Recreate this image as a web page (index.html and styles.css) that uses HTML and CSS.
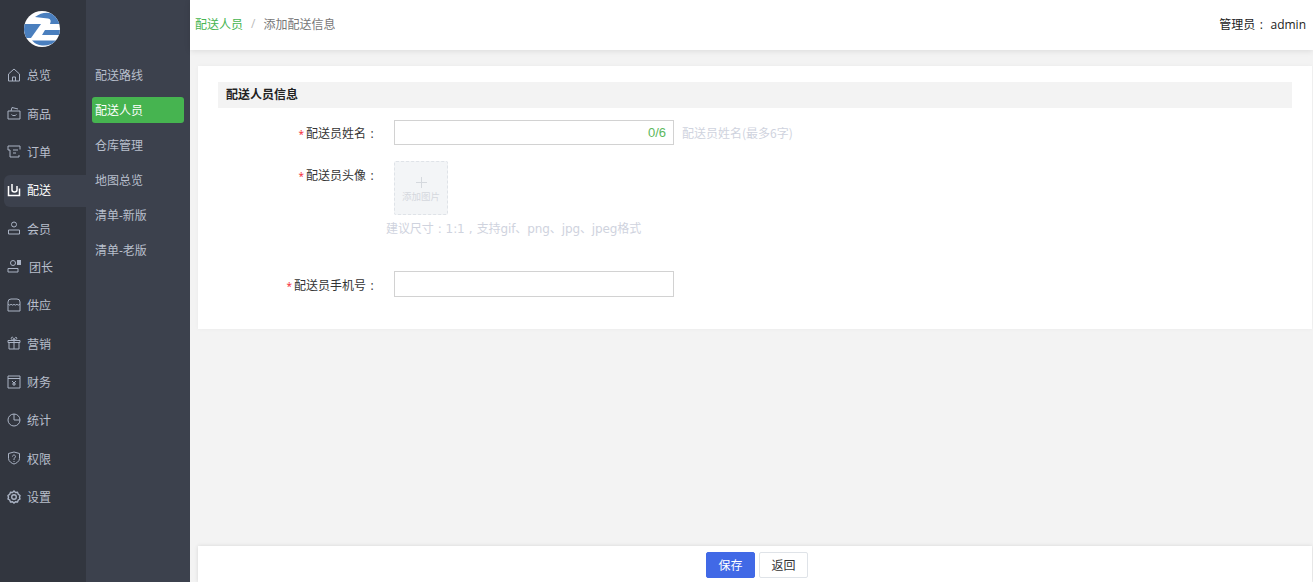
FILE: index.html
```html
<!DOCTYPE html>
<html lang="zh">
<head>
<meta charset="utf-8">
<title>添加配送信息</title>
<link rel="stylesheet" href="styles.css">
</head>
<body>
<div class="app">
  <aside class="rail">
    <div class="logo">
      <svg viewBox="0 0 36 36" width="36" height="36">
        <defs><clipPath id="disc"><circle cx="18" cy="18" r="18"/></clipPath></defs>
        <g clip-path="url(#disc)">
          <rect width="36" height="36" fill="#fff"/>
          <path d="M11 6Q19 0 28 2.500Q34 6 36 13H26Q28 8 24 7.500Q17 6.500 11 6z" fill="#4a7fbe"/>
          <path d="M0 13H17L7 27H2Q-1 20 0 13z" fill="#4a7fbe"/>
          <path d="M21 19H36V24H18z" fill="#4a7fbe"/>
          <path d="M8 29.500H33Q27 35 18 34.500Q12 34 8 29.500z" fill="#4a7fbe"/>
        </g>
      </svg>
    </div>
    <nav class="rail-list">
      <a class="rail-item"><svg class="ic" viewBox="0 0 14 14"><path d="M1.500 6L7 1l5.500 5v7h-11zM5.500 13V9h3v4"/></svg><span>总览</span></a>
      <a class="rail-item"><svg class="ic" viewBox="0 0 14 14"><path d="M1 5h12v8H1zM4 5l1-3.500 6 1.500M4.500 8.500c1 1.500 4 1.500 5 0"/></svg><span>商品</span></a>
      <a class="rail-item"><svg class="ic" viewBox="0 0 14 14"><path d="M1 2h12v3.500M1 2v4h2v7h9v-2M6 6h5M6 9h3"/></svg><span>订单</span></a>
      <a class="rail-item active"><svg class="ic" viewBox="0 0 14 14"><path d="M1.500 3v9.500h11V5.500M5 1v6c0 2.500 5 2.500 5 0V3"/></svg><span>配送</span></a>
      <a class="rail-item"><svg class="ic" viewBox="0 0 14 14"><circle cx="7" cy="3.500" r="2.500"/><path d="M1.500 9h11v4h-11z"/></svg><span>会员</span></a>
      <a class="rail-item leader"><svg class="ic" viewBox="0 0 14 14"><circle cx="6" cy="4" r="2.500"/><path d="M1 9.500h10v3.500H1z"/><path class="fill" d="M10 1h4v5h-4z"/></svg><span>团长</span></a>
      <a class="rail-item"><svg class="ic" viewBox="0 0 14 14"><path d="M4 1h6q3 0 3 3v9H1V4q0-3 3-3zM1 6c1 1.500 2.500 1.500 3 0 1 1.500 2.500 1.500 3 0 .5 1.500 2 1.500 3 0 .5 1.500 2 1.500 3 0"/></svg><span>供应</span></a>
      <a class="rail-item"><svg class="ic" viewBox="0 0 14 14"><path d="M1 4.500h12v2H1zM2 6.500V13h10V6.500M7 4.500V13M7 4.500C5 4 3.500 3 4.500 1.500S7 3 7 4.500c0-1.500 1.500-4 2.500-3S9 4 7 4.500"/></svg><span>营销</span></a>
      <a class="rail-item"><svg class="ic" viewBox="0 0 14 14"><path d="M1 1h12v12H1zM1 3.500h12M5 6l2 2 2-2M7 8v3M5 9h4"/></svg><span>财务</span></a>
      <a class="rail-item"><svg class="ic" viewBox="0 0 14 14"><circle cx="7" cy="7" r="6"/><path d="M7 1v6h6"/></svg><span>统计</span></a>
      <a class="rail-item"><svg class="ic" viewBox="0 0 14 14"><path d="M1.500 2.500L7 1l5.500 1.500v5C12.500 10.500 9 12.500 7 13c-2-.5-5.500-2.500-5.500-5.500zM5.500 5.500a1.500 1.500 0 1 1 2.300 1.300L7 7.500V9M7 10v1"/></svg><span>权限</span></a>
      <a class="rail-item"><svg class="ic gear" viewBox="0 0 14 14"><path d="M7 1l1.500 1.500 2-.3.800 2L13 5.500 12.500 7.500l.5 1.500-1.700 1-.8 2-2-.2L7 13l-1.500-1.200-2 .2-.8-2L1 9l.5-1.500L1 5.500l1.700-1.300.8-2 2 .3z"/><circle cx="7" cy="7" r="2.300"/></svg><span>设置</span></a>
    </nav>
  </aside>
  <aside class="subnav">
    <a class="sub-item">配送路线</a>
    <a class="sub-item active">配送人员</a>
    <a class="sub-item">仓库管理</a>
    <a class="sub-item">地图总览</a>
    <a class="sub-item">清单-新版</a>
    <a class="sub-item">清单-老版</a>
  </aside>
  <div class="main">
    <header class="topbar">
      <div class="crumbs"><a class="crumb-link">配送人员</a><span class="crumb-sep">/</span><span class="crumb-now">添加配送信息</span></div>
      <div class="user">管理员<span class="punct">:</span> admin</div>
    </header>
    <div class="scroll">
      <section class="card">
        <h2 class="card-title">配送人员信息</h2>
        <div class="row row-name">
          <label class="label"><i>*</i>配送员姓名<span class="punct">:</span></label>
          <div class="field"><span class="count">0/6</span></div>
          <span class="hint">配送员姓名(最多6字)</span>
        </div>
        <div class="row row-avatar">
          <label class="label low"><i>*</i>配送员头像<span class="punct">:</span></label>
          <div class="upload"><span class="plus"></span><span class="upload-text">添加图片</span></div>
        </div>
        <p class="tip">建议尺寸<span class="punct">:</span>1:1<span class="punct">,</span>支持gif、png、jpg、jpeg格式</p>
        <div class="row row-phone">
          <label class="label low"><i>*</i>配送员手机号<span class="punct">:</span></label>
          <div class="field tall"></div>
        </div>
      </section>
    </div>
    <footer class="actions">
      <button class="btn primary">保存</button>
      <button class="btn">返回</button>
    </footer>
  </div>
</div>
</body>
</html>
```
FILE: styles.css
```css
* { box-sizing: border-box; }
html, body { margin: 0; height: 100%; overflow: hidden; }
body { font-family: "Open Sans", "Noto Sans CJK SC", sans-serif; font-size: 12px; color: #333; }
.punct { display: inline-block; width: 12px; text-align: center; }
.app { display: flex; height: 582px; }
.rail { width: 86px; flex: none; background: #32363f; }
.logo { height: 57px; padding: 11px 2px 0 0; display: flex; justify-content: center; }
.logo svg { display: block; }
.rail-list { display: flex; flex-direction: column; padding-left: 4px; }
.rail-item { height: 38.36px; display: flex; align-items: center; padding-left: 3px; color: #b8bfcc; border-radius: 6px 0 0 6px; }
.rail-item span { margin-left: 6px; line-height: 16px; }
.rail-item.leader span { margin-left: 8px; }
.rail-item.active { color: #fff; background: #3c414d; height: 32px; margin: 3.18px 0; }
.ic { width: 14px; height: 14px; flex: none; fill: none; stroke: #aab3c4; stroke-width: 1; margin-top: -3px; }
.ic .fill { fill: #aab3c4; stroke: none; }
.ic.gear { stroke-width: 1.400; }
.active .ic { stroke: #fff; stroke-width: 1.500; }
.subnav { width: 104px; flex: none; background: #3c414d; padding: 62px 6px 0; display: flex; flex-direction: column; }
.sub-item { height: 26px; margin-bottom: 9px; padding: 1px 0 0 3px; color: #b8bfcc; line-height: 26px; border-radius: 3px; }
.sub-item.active { background: #46b450; color: #fff; }
.main { flex: 1; min-width: 0; display: flex; flex-direction: column; background: #f3f3f3; }
.topbar { height: 50px; flex: none; background: #fff; display: flex; align-items: center; justify-content: space-between; padding: 0 7px 3px 5px; box-shadow: 0 1px 6px rgba(0, 0, 0, .1); position: relative; }
.crumbs { display: flex; align-items: center; }
.crumb-link { color: #46b450; }
.crumb-sep { color: #bbb; margin: 0 8px; }
.crumb-now { color: #777; }
.user { color: #222; white-space: pre; }
.scroll { flex: 1; min-height: 0; padding: 16px 1px 0 8px; }
.card { background: #fff; height: 263px; padding: 16px 20px 0; box-shadow: 0 0 4px rgba(0, 0, 0, .04); }
.card-title { margin: 0; height: 26px; padding-left: 8px; background: #f3f3f3; font-size: 12px; line-height: 26px; font-weight: 700; color: #222; }
.row { display: flex; align-items: flex-start; }
.row-name { height: 26px; margin-top: 12px; }
.row-avatar { margin-top: 15px; }
.row-phone { margin-top: 34px; }
.label { width: 176px; flex: none; text-align: right; color: #333; line-height: 27px; padding-right: 16px; white-space: nowrap; }
.label.low { line-height: 30px; }
.label i { color: #f5222d; font-style: normal; font-size: 10px; margin-right: 2px; }
.field { width: 280px; height: 25px; border: 1px solid #d2d2d2; display: flex; align-items: center; justify-content: flex-end; padding-right: 7px; }
.field.tall { height: 26px; }
.count { color: #5cb85c; font-family: "Liberation Sans", sans-serif; font-size: 13px; }
.hint { margin-left: 8px; color: #cfd3de; line-height: 25px; font-family: "Noto Sans CJK SC", sans-serif; }
.upload { width: 54px; height: 54px; border: 1px dashed #dfe3e8; border-radius: 2px; background: #f3f5f7; display: flex; flex-direction: column; align-items: center; color: #d5d8de; }
.plus { width: 11px; height: 11px; margin-top: 15px; background: linear-gradient(#d5d9de, #d5d9de) center / 100% 1px no-repeat, linear-gradient(#d5d9de, #d5d9de) center / 1px 100% no-repeat; }
.upload-text { font-size: 9.500px; line-height: 12px; margin-top: 3px; }
.tip { margin: 5px 0 0 168px; height: 17px; color: #cfd3de; line-height: 18px; white-space: nowrap; letter-spacing: -.1px; font-family: "DejaVu Sans", "Noto Sans CJK SC", sans-serif; }
.actions { height: 36px; flex: none; margin: 0 1px 0 8px; background: #fff; display: flex; justify-content: center; align-items: center; gap: 4px; padding: 2px 0 0 4px; box-shadow: 0 0 4px rgba(0, 0, 0, .12); }
.btn { width: 49px; height: 26px; font: inherit; color: #333; background: #fff; border: 1px solid #dfe3e8; border-radius: 2px; padding: 0; }
.btn.primary { background: #4169e6; border-color: #4169e6; color: #fff; }
```
